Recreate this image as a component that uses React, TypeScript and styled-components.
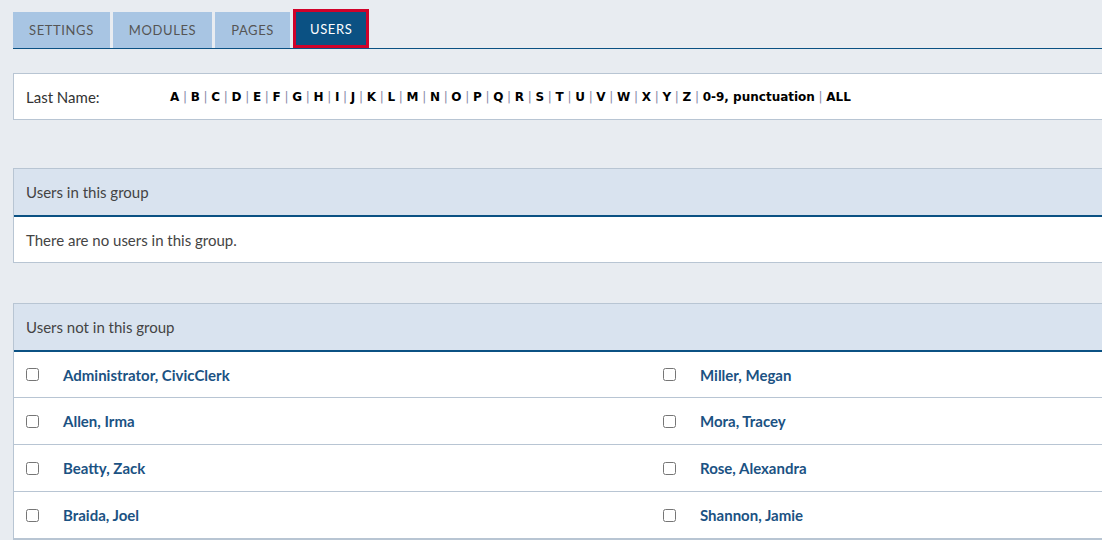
import * as React from "react";
import styled, { createGlobalStyle } from "styled-components";

const letters = "ABCDEFGHIJKLMNOPQRSTUVWXYZ".split("").concat(["0-9, punctuation", "ALL"]);

const leftUsers = ["Administrator, CivicClerk", "Allen, Irma", "Beatty, Zack", "Braida, Joel"];
const rightUsers = ["Miller, Megan", "Mora, Tracey", "Rose, Alexandra", "Shannon, Jamie"];

const tabs = ["Settings", "Modules", "Pages", "Users"];

export default function App() {
  return (
    <>
      <GlobalStyle />
      <StyledPage>
        <StyledTabBar>
          {tabs.map((tab) => (
            <StyledTab key={tab} $active={tab === "Users"}>
              {tab}
            </StyledTab>
          ))}
        </StyledTabBar>

        <StyledFilterBox>
          <StyledFilterLabel>Last Name:</StyledFilterLabel>
          <StyledLetters>
            {letters.map((letter, i) => (
              <React.Fragment key={letter}>
                {i > 0 && <StyledSeparator>|</StyledSeparator>}
                <StyledLetter href="#">{letter}</StyledLetter>
              </React.Fragment>
            ))}
          </StyledLetters>
        </StyledFilterBox>

        <StyledPanel>
          <StyledPanelHeader>Users in this group</StyledPanelHeader>
          <StyledPanelBody>There are no users in this group.</StyledPanelBody>
        </StyledPanel>

        <StyledPanel>
          <StyledPanelHeader>Users not in this group</StyledPanelHeader>
          {leftUsers.map((name, i) => (
            <StyledUserRow key={name}>
              <StyledUserCell>
                <StyledCheckbox type="checkbox" />
                <StyledUserName href="#">{name}</StyledUserName>
              </StyledUserCell>
              <StyledUserCell>
                <StyledCheckbox type="checkbox" />
                <StyledUserName href="#">{rightUsers[i]}</StyledUserName>
              </StyledUserCell>
            </StyledUserRow>
          ))}
        </StyledPanel>
      </StyledPage>
    </>
  );
}

const GlobalStyle = createGlobalStyle`
  body {
    margin: 0;
    background: #e8ecf1;
    font-family: "Lato", "Noto Sans", sans-serif;
    color: #333;
    overflow: hidden;
  }
`;

const StyledPage = styled.div`
  width: 1276px;
  padding: 9px 0 0 13px;
`;

const StyledTabBar = styled.div`
  display: flex;
  align-items: flex-end;
  gap: 3px;
  border-bottom: 1px solid #0b5183;
`;

const StyledTab = styled.div<{ $active?: boolean }>`
  box-sizing: border-box;
  display: flex;
  align-items: center;
  height: ${(p) => (p.$active ? "39px" : "36px")};
  padding: 0 ${(p) => (p.$active ? "14px" : "16px")};
  padding-bottom: ${(p) => (p.$active ? "0" : "1px")};
  background: ${(p) => (p.$active ? "#0b5183" : "#a8c5e3")};
  border: ${(p) => (p.$active ? "3px solid #d0022a" : "none")};
  color: ${(p) => (p.$active ? "#fff" : "#555")};
  font-size: 13px;
  letter-spacing: 0.6px;
  text-transform: uppercase;
  cursor: pointer;
`;

const StyledFilterBox = styled.div`
  display: flex;
  align-items: center;
  height: 47px;
  box-sizing: border-box;
  margin-top: 24px;
  padding-left: 12px;
  background: #fff;
  border: 1px solid #b8c5d3;
`;

const StyledFilterLabel = styled.div`
  width: 144px;
  font-size: 15px;
  color: #333;
`;

const StyledLetters = styled.div`
  display: flex;
  align-items: center;
  font-family: "DejaVu Sans", Verdana, sans-serif;
  font-size: 12px;
`;

const StyledLetter = styled.a`
  color: #000;
  font-weight: bold;
  text-decoration: none;
`;

const StyledSeparator = styled.span`
  color: #8a8aa8;
  margin: 0 3.7px;
`;

const StyledPanel = styled.div`
  margin-top: 48px;
  background: #fff;
  border: 1px solid #b8c5d3;

  & + & {
    margin-top: 40px;
  }
`;

const StyledPanelHeader = styled.div`
  display: flex;
  align-items: center;
  height: 46px;
  padding-left: 12px;
  background: #d9e3ef;
  border-bottom: 2px solid #0b5183;
  font-size: 15px;
  color: #444;
`;

const StyledPanelBody = styled.div`
  display: flex;
  align-items: center;
  height: 45px;
  padding-left: 12px;
  font-size: 15px;
  color: #444;
`;

const StyledUserRow = styled.div`
  display: grid;
  grid-template-columns: 1fr 1fr;
  height: 46px;
  border-bottom: 1px solid #b8c5d3;

  &:nth-child(2) {
    height: 45px;
  }
`;

const StyledUserCell = styled.div`
  display: flex;
  align-items: center;
  padding-left: 12px;
`;

const StyledCheckbox = styled.input`
  width: 13px;
  height: 13px;
  margin: 0 24px 0 0;
`;

const StyledUserName = styled.a`
  font-size: 15px;
  font-weight: bold;
  color: #1b5283;
  text-decoration: none;
`;
